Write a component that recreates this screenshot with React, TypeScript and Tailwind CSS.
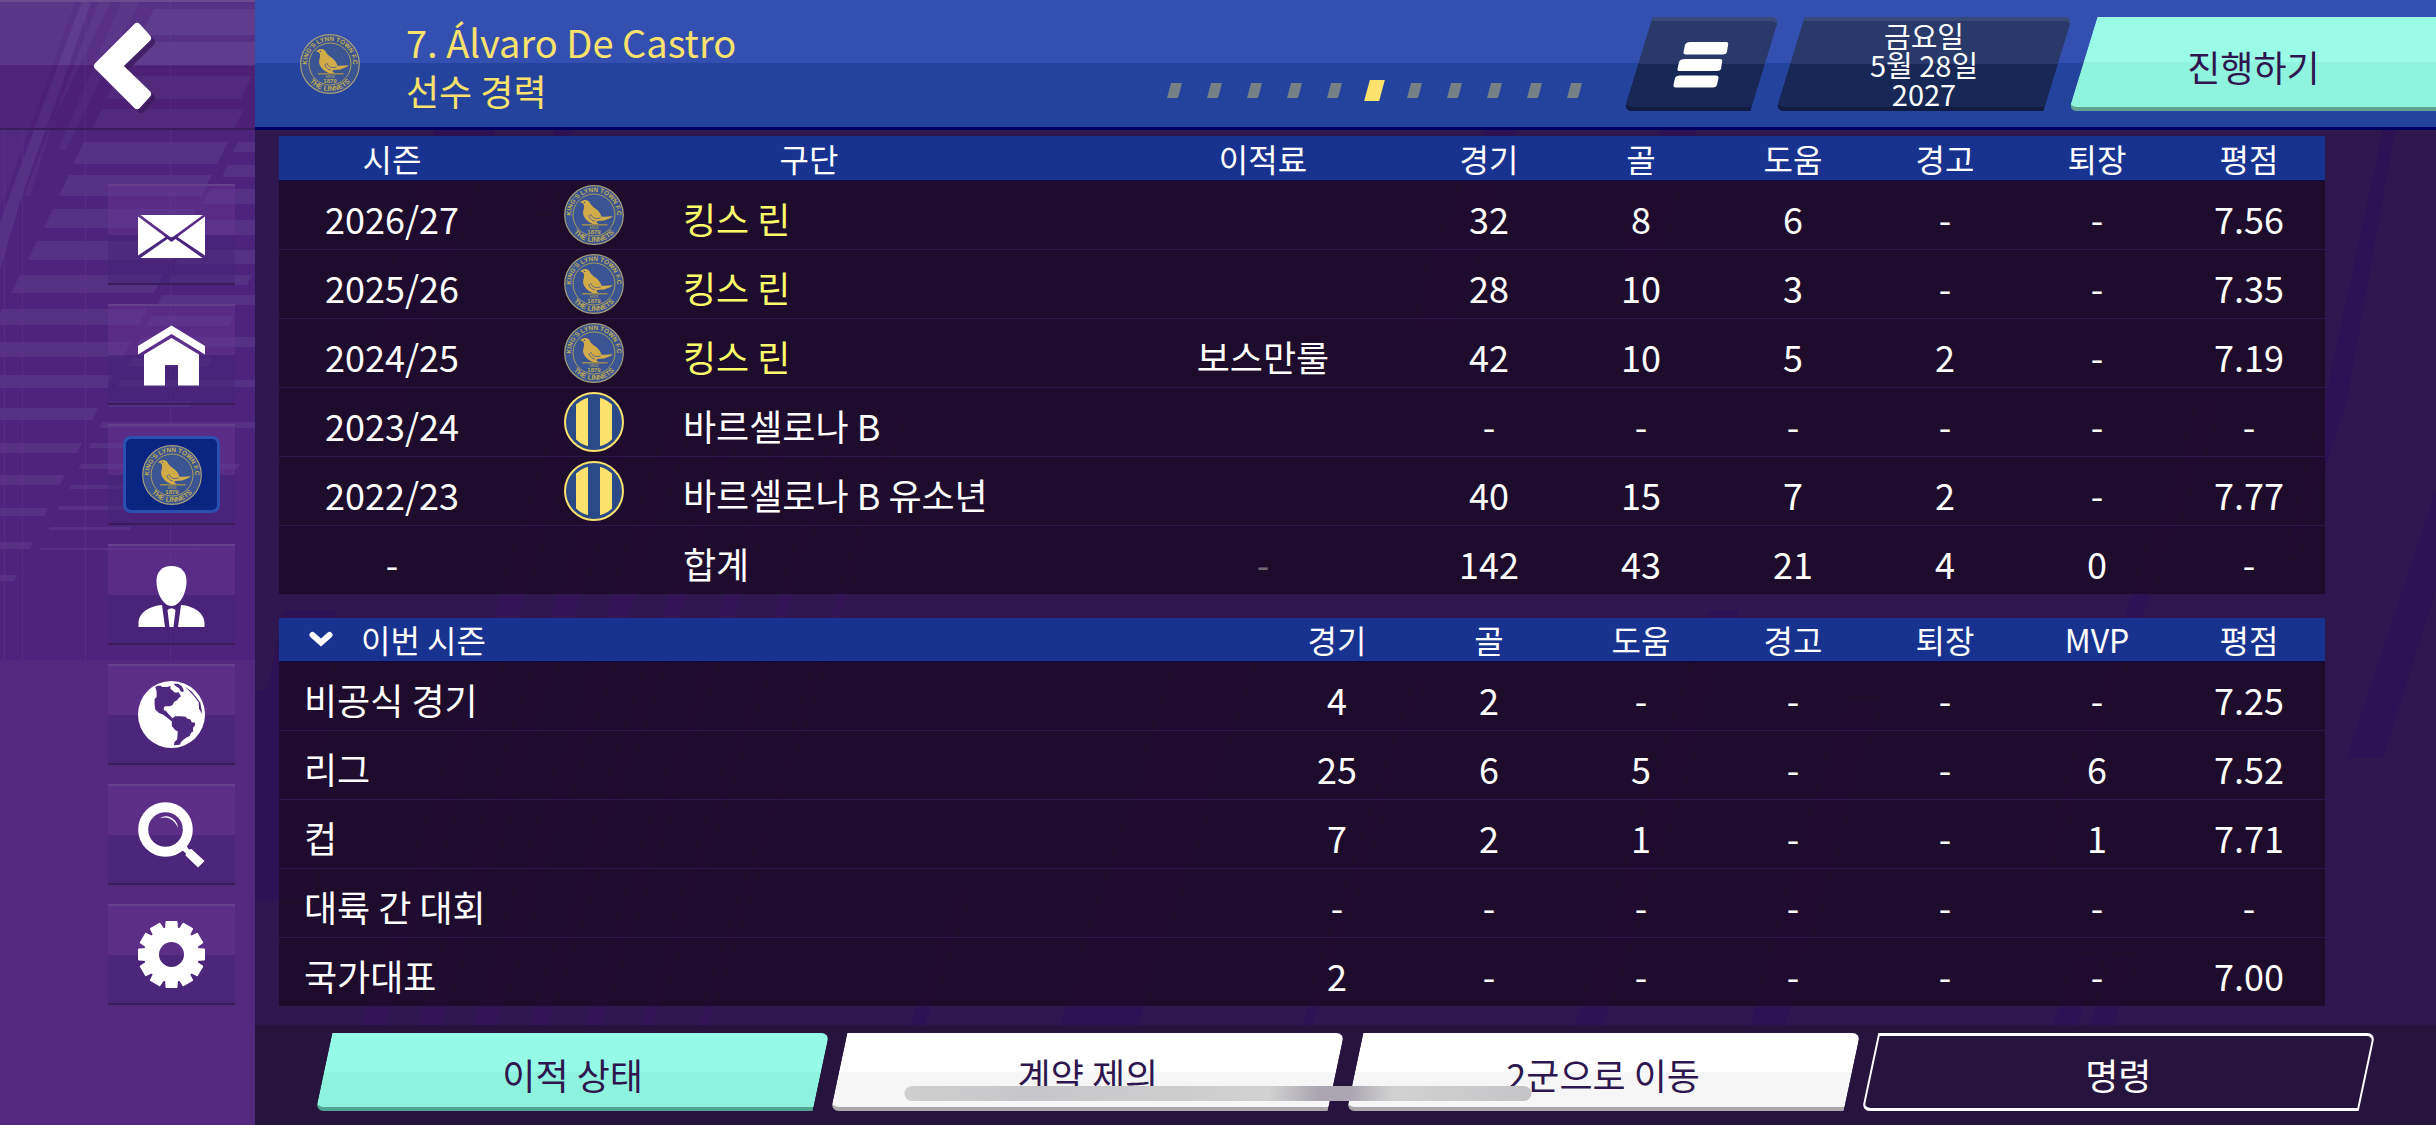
import { useId } from 'react'
import type { ReactNode } from 'react'

type Club = 'lynn' | 'barca'

type CareerRow = {
  season: string
  crest?: Club
  club: string
  fee?: string
  stats: string[]
}

const career: CareerRow[] = [
  { season: '2026/27', crest: 'lynn', club: '킹스 린', stats: ['32', '8', '6', '-', '-', '7.56'] },
  { season: '2025/26', crest: 'lynn', club: '킹스 린', stats: ['28', '10', '3', '-', '-', '7.35'] },
  { season: '2024/25', crest: 'lynn', club: '킹스 린', fee: '보스만룰', stats: ['42', '10', '5', '2', '-', '7.19'] },
  { season: '2023/24', crest: 'barca', club: '바르셀로나 B', stats: ['-', '-', '-', '-', '-', '-'] },
  { season: '2022/23', crest: 'barca', club: '바르셀로나 B 유소년', stats: ['40', '15', '7', '2', '-', '7.77'] },
  { season: '-', club: '합계', fee: '-', stats: ['142', '43', '21', '4', '0', '-'] },
]

const careerHeads = ['경기', '골', '도움', '경고', '퇴장', '평점']
const seasonHeads = ['경기', '골', '도움', '경고', '퇴장', 'MVP', '평점']

const currentSeason = [
  { name: '비공식 경기', stats: ['4', '2', '-', '-', '-', '-', '7.25'] },
  { name: '리그', stats: ['25', '6', '5', '-', '-', '6', '7.52'] },
  { name: '컵', stats: ['7', '2', '1', '-', '-', '1', '7.71'] },
  { name: '대륙 간 대회', stats: ['-', '-', '-', '-', '-', '-', '-'] },
  { name: '국가대표', stats: ['2', '-', '-', '-', '-', '-', '7.00'] },
]

function LynnCrest() {
  const id = useId()
  return (
    <svg viewBox="0 0 60 60" className="block size-[60px]" role="img" aria-label="King's Lynn Town">
      <defs>
        <path id={`${id}top`} d="M7.2 33 A23 23 0 1 1 52.8 33" />
        <path id={`${id}bot`} d="M2.8 32 A27.3 27.3 0 0 0 57.2 32" />
      </defs>
      <circle cx="30" cy="30" r="29.3" fill="#3a5592" stroke="#a79f7c" strokeWidth="1.2" />
      <circle cx="30" cy="30" r="21" fill="#3a5592" stroke="#a89b62" strokeWidth="1" />
      <g fill="#c4ac52" fontFamily="Liberation Sans, sans-serif" fontWeight="700" textAnchor="middle">
        <text fontSize="6.4">
          <textPath href={`#${id}top`} startOffset="50%">KING'S LYNN TOWN F.C</textPath>
        </text>
        <text fontSize="7">
          <textPath href={`#${id}bot`} startOffset="50%">THE LINNETS</textPath>
        </text>
        <text x="30" y="49" fontSize="6">1879</text>
        <text x="30" y="43.6" fontSize="3" opacity=".7">SINCE</text>
      </g>
      <path
        d="M15.8 17.2 L18.3 15.8 C20 14.6 23.4 14.6 25 16.6 C26.4 18.6 27 20.4 29.6 22.2 C33.6 25 36.6 27.4 37.2 31.4 C41 32 45 31.4 49 31.2 C46 33.4 41.6 35.8 36.4 35.8 C33.4 35.8 31.4 36.6 33 38 L35 39.2 L29.6 39.2 C24.6 37.4 20 33.6 19.2 29 C18.8 25.4 21 22 19.6 19.2 C19 18 17.4 17.6 15.8 17.2 Z"
        fill="#d3ac4a"
      />
      <path d="M26.8 29 C28 33 32 34.6 36.6 32.8 M25 30 C25 33 27.6 35.6 31 36" fill="none" stroke="#3a5592" strokeWidth=".8" />
      <circle cx="20.4" cy="17.4" r=".7" fill="#3a5592" />
      <path d="M18 39.8 H43.6" stroke="#a08f4e" strokeWidth="1.4" />
    </svg>
  )
}

function BarcaCrest() {
  const id = useId()
  return (
    <svg viewBox="0 0 60 60" className="block size-[60px]" role="img" aria-label="Barcelona B">
      <clipPath id={id}>
        <circle cx="30" cy="30" r="25" />
      </clipPath>
      <circle cx="30" cy="30" r="29" fill="#2a4a87" stroke="#fbe26c" strokeWidth="2" />
      <path d="M12 0h12v60H12zM36 0h12v60H36z" fill="#fbe26c" clipPath={`url(#${id})`} />
    </svg>
  )
}

// slanted bars: [x1, x2, y, height]
const bars = [
  [154, 270, 9, 26], [138, 270, 42, 24], [118, 252, 76, 23], [102, 244, 109, 21], [84, 228, 142, 22],
  [69, 212, 175, 21], [53, 196, 209, 19], [37, 180, 241, 19], [20, 163, 275, 18], [2, 147, 309, 16],
  [-20, 131, 342, 15], [-20, 114, 375, 13], [-20, 98, 408, 12], [-20, 82, 443, 10], [-20, 65, 475, 10],
  [-20, 48, 508, 8], [-20, 33, 542, 7], [-20, 17, 575, 6],
  [238, 270, 142, 10], [228, 270, 165, 12], [210, 270, 189, 15], [200, 270, 220, 15], [182, 270, 250, 14],
  [172, 252, 275, 10], [162, 270, 295, 10], [152, 234, 316, 10], [141, 270, 337, 10], [131, 212, 358, 9],
  [121, 270, 380, 7], [111, 193, 401, 6], [102, 270, 422, 6], [91, 172, 443, 5], [81, 240, 464, 5],
  [71, 150, 485, 4], [60, 220, 506, 4], [50, 131, 527, 3], [40, 199, 548, 2],
]

function SidebarBackdrop() {
  return (
    <svg viewBox="0 0 255 660" className="absolute inset-x-0 top-0 w-full" aria-hidden="true">
      <rect width="255" height="660" fill="#4e237d" />
      <g fill="#553085">
        {bars.map(([x1, x2, y, h]) => (
          <path key={`${x1}-${y}`} d={`M${x1} ${y}H${x2}L${x2 - h / 2} ${y + h}H${x1 - h / 2}Z`} />
        ))}
        <path d="M0 0H76L5 196L0 205Z" opacity=".55" />
        <path d="M82 0H92L22 196L0 270V222Z" />
        <path d="M99 0H112L54 118L30 196H24Z" opacity=".7" />
        <path d="M122 0H140L66 150H58Z" opacity=".6" />
      </g>
      <path d="M85.500 0V660M170.500 0V660M4.500 130V660M22.500 130V660" stroke="#5c3488" strokeWidth="1" opacity=".6" />
    </svg>
  )
}

function MainBackdrop() {
  return (
    <svg
      viewBox="0 0 2181 1125"
      preserveAspectRatio="xMidYMin slice"
      className="absolute inset-0 size-full"
      aria-hidden="true"
    >
      <path
        fill="#331557"
        d="M106 1025L304 415H328L130 1025ZM163 1025L361 415H384L186 1025ZM218 1025L416 415H439L241 1025ZM275 1025L473 415H490L292 1025ZM330 1025L528 415H544L346 1025ZM386 1025L584 415H596L398 1025ZM444 1025L642 415H650L452 1025Z"
      />
      <path
        fill="#2d1058"
        d="M180 130H240L150 410H98ZM300 130H318L296 212H276ZM655 1025L700 890H716L670 1025ZM805 1025L935 620H1012L883 1025ZM1047 1025L1160 680H1170L1057 1025ZM1175 260L1230 130H1262L1200 330H1160ZM1320 1025L1455 610H1484L1348 1025ZM1405 130H1441L1400 270H1360ZM1495 1025L1590 700H1625L1530 1025ZM1798 1025L1822 955H1848L1822 1025ZM1835 1025L1858 955H1882L1858 1025ZM2070 400H2092L2042 555H2030ZM2128 130H2140L2092 400H2070ZM1945 400H1968L1790 880H1778ZM2092 758L2181 490V590L2128 758ZM0 690L12 690L30 610H80L60 900H0Z"
        opacity=".8"
      />
    </svg>
  )
}

function EnvelopeIcon() {
  return (
    <svg viewBox="0 0 67 67" className="size-[67px] fill-white" aria-hidden="true">
      <path d="M2.500 14H65L35.500 35.500Q33.500 37 31.500 35.500ZM0 15.500L27.500 36L0 54.500ZM67 15.500V54.500L39.500 36ZM2.500 57L29.500 38L33.500 41L37.500 38L64.500 57Z" />
    </svg>
  )
}

function HomeIcon() {
  return (
    <svg viewBox="0 0 67 67" className="size-[67px] fill-white" aria-hidden="true">
      <path d="M33.500 4.500L67 25V33.500L33.500 13L0 33.500V25ZM33.500 17L61 33.500V64.500H40V44H27V64.500H6V33.500Z" />
    </svg>
  )
}

function PersonIcon() {
  return (
    <svg viewBox="0 0 67 67" className="size-[67px] fill-white" aria-hidden="true">
      <path d="M33.500 5C43 5 48.500 11 48.500 20C48.500 32 42 45 33.500 45C25 45 18.500 32 18.500 20C18.500 11 24 5 33.500 5Z" />
      <path d="M0.500 66V62C1 51 12 45 24 44L27 66ZM66.500 66V62C66 51 55 45 43 44L40 66ZM29.500 49Q33.500 45.500 37.500 49L35.500 66H31.500Z" />
    </svg>
  )
}

function GlobeIcon() {
  return (
    <svg viewBox="0 0 202 202" className="size-[67px]" aria-hidden="true">
      <circle cx="101" cy="101" r="101" fill="#fff" />
      <path
        fill="#4f2880"
        d="M52 18L60 14H70L72 18H88L98 15V24L104 28L110 35H118L122 34L130 46L124 50L118 58L110 62L104 72L96 76H82L78 80V88L84 90L90 97L104 112L112 106L130 106L144 108L148 113L158 116L162 124L172 126V134L166 140V152L160 156L156 166L146 170L136 178L130 184L126 192L108 194L110 184L118 176L120 152L112 148L102 136V122L92 114L76 102L62 96L52 86L50 70V54L56 48V30ZM108 8H120L132 16L138 28L136 34L128 30L124 22L112 14ZM142 17L162 32L180 54L188 66L194 100L184 84L183 64L166 42Z"
      />
      <path d="M146 16Q170 32 186 60" fill="none" stroke="#fff" strokeWidth="2" />
    </svg>
  )
}

function SearchIcon() {
  return (
    <svg viewBox="0 0 67 67" className="size-[67px]" aria-hidden="true">
      <circle cx="27.500" cy="28.500" r="22.300" fill="none" stroke="#fff" strokeWidth="10" />
      <path d="M21.500 17.500Q27 13.500 33 16.500Q39.500 20 40 27Q37 20 32 17.800Q27 15.500 21.500 17.500Z" fill="#fff" />
      <path d="M44 49L48.500 45L51 48.500L53.500 48L66.500 60L60 66.500L47.500 54.500L48 52.500Z" fill="#fff" />
    </svg>
  )
}

const teeth = [0, 30, 60, 90, 120, 150, 180, 210, 240, 270, 300, 330]

function GearIcon() {
  return (
    <svg viewBox="0 0 67 67" className="size-[67px]" aria-hidden="true">
      <circle cx="33.500" cy="33.500" r="20" fill="none" stroke="#fff" strokeWidth="15" />
      {teeth.map((deg) => (
        <path key={deg} d="M27.500 1Q27.500 0 28.500 0H38.500Q39.500 0 39.500 1L40 9H27Z" fill="#fff" transform={`rotate(${deg} 33.500 33.500)`} />
      ))}
    </svg>
  )
}

const navItems: { label: string; icon: ReactNode }[] = [
  { label: '메시지', icon: <EnvelopeIcon /> },
  { label: '홈', icon: <HomeIcon /> },
  {
    label: '구단',
    icon: (
      <span className="flex h-[77px] w-[97px] items-center justify-center rounded-lg border-[3px] border-[#2a4fae] bg-[#0a2482]">
        <LynnCrest />
      </span>
    ),
  },
  { label: '감독', icon: <PersonIcon /> },
  { label: '세계', icon: <GlobeIcon /> },
  { label: '검색', icon: <SearchIcon /> },
  { label: '설정', icon: <GearIcon /> },
]

function Sidebar() {
  return (
    <aside className="relative w-[255px] shrink-0 bg-[#53287e]">
      <SidebarBackdrop />
      <div className="relative flex flex-col">
        <button
          type="button"
          aria-label="뒤로"
          className="flex h-[130px] w-full justify-center border-t-2 border-b-2 border-t-[#6d4b92] border-b-[#3b1c5c] bg-[linear-gradient(rgba(255,255,255,0.06)_50%,rgba(75,25,95,0.25)_50%)]"
        >
          <svg viewBox="0 0 70 100" className="mt-3 h-[100px] w-[70px]" aria-hidden="true">
            <path
              d="M44 13L54 24L25 52L54 80L44 91L5 52Z"
              transform="translate(4 4)"
              fill="#3c1b5e"
              stroke="#3c1b5e"
              strokeWidth="8"
              strokeLinejoin="round"
              opacity=".8"
            />
            <path
              d="M44 13L54 24L25 52L54 80L44 91L5 52Z"
              fill="#fff"
              stroke="#fff"
              strokeWidth="8"
              strokeLinejoin="round"
            />
          </svg>
        </button>
        <nav className="flex flex-col items-end gap-[19px] pt-[54px] pr-5">
          {navItems.map((item) => (
            <button
              key={item.label}
              type="button"
              aria-label={item.label}
              className="flex h-[101px] w-[127px] items-center justify-center border-t-2 border-b-2 border-t-[#65408d] border-b-[#3b1c5c] bg-[linear-gradient(rgba(104,54,146,0.45)_50%,rgba(68,36,118,0.5)_50%)]"
            >
              {item.icon}
            </button>
          ))}
        </nav>
      </div>
    </aside>
  )
}

const careerPages = [1, 2, 3, 4, 5, 6, 7, 8, 9, 10, 11]

function PageDots() {
  return (
    <ol className="flex items-center gap-[29px] pt-[54px]">
      {careerPages.map((page) => (
        <li
          key={page}
          className={
            page === 6
              ? '-mx-0.5 h-[21px] w-[15px] -skew-x-15 bg-[#fbe26c]'
              : 'h-[15px] w-[11px] -skew-x-15 bg-[#758184]'
          }
        />
      ))}
    </ol>
  )
}

function Header() {
  return (
    <header className="flex h-[130px] items-start overflow-hidden border-b-[3px] border-[#00005f] bg-[linear-gradient(#3350b0_50%,#24439c_50%)] pl-[45px]">
      <div className="flex flex-1 items-center gap-[46px] self-stretch">
        <LynnCrest />
        <h1 className="pt-1 text-[38px] leading-[48px] font-normal text-[#fbe26c]">
          7. Álvaro De Castro
          <span className="block text-4xl leading-[48px]">선수 경력</span>
        </h1>
      </div>
      <div className="flex gap-[58px] self-stretch">
        <div className="self-center">
          <PageDots />
        </div>
        <div className="flex gap-[25px] pt-[17px]">
          <button type="button" aria-label="메뉴" className="relative h-[94px] w-[127px] pt-[2px]">
            <span className="absolute inset-0 -skew-x-17 rounded-tr-lg rounded-bl-lg border-t-4 border-b-4 border-t-[#384a78] border-b-[#101b3f] bg-[linear-gradient(#28396a_50%,#172856_50%)]" />
            <svg viewBox="0 0 57 46" className="relative mx-auto h-[46px] w-[57px] fill-white" aria-hidden="true">
              <path d="M14 0H50Q53 0 52 3L51 10Q50 12.500 47 12.500H10Q7 12.500 7.500 10L9 3Q10 0 14 0ZM9 17H44Q47 17 46 20L45 27Q44 29 41 29H4Q1 29 1.500 27L3 20Q4 17 9 17ZM4 33.500H40Q43 33.500 42.500 36L41 43Q40 45.500 37 45.500H0Q-3 45.500 -2.500 43L-1 36Q0 33.500 4 33.500Z" transform="translate(3 0)" />
            </svg>
          </button>
          <div className="relative flex h-[94px] w-[268px] items-center justify-center">
            <span className="absolute inset-0 -skew-x-17 rounded-tr-lg rounded-bl-lg border-t-4 border-b-4 border-t-[#384a78] border-b-[#101b3f] bg-[linear-gradient(#28396a_50%,#172856_50%)]" />
            <p className="relative text-center text-[29px] leading-[29px] text-white">
              금요일
              <br />
              5월 28일
              <br />
              2027
            </p>
          </div>
          <button type="button" className="relative h-[94px] w-[353px] pt-1 pr-3 text-4xl text-[#2e174e]">
            <span className="absolute inset-y-0 -right-10 left-0 -skew-x-17 rounded-bl-lg border-b-4 border-[#5fa293] bg-[linear-gradient(#9afce7_50%,#90f3de_50%)]" />
            <span className="relative">진행하기</span>
          </button>
        </div>
      </div>
    </header>
  )
}

const headRow = 'h-[44px] border-b border-[#0b0b4a] bg-[#17338f] text-[32px] leading-10 text-white'
const bodyRow = 'h-[69px] border-b border-[#2e174e]'

function CareerTable() {
  return (
    <table className="w-full table-fixed border-collapse bg-[#18091f]/70 text-center text-4xl text-white">
      <thead>
        <tr className={headRow}>
          <th scope="col" className="w-[226px] font-normal">시즌</th>
          <th scope="col" className="w-[178px]" aria-label="엠블럼" />
          <th scope="col" className="pr-[178px] font-normal">구단</th>
          <th scope="col" className="w-[300px] font-normal">이적료</th>
          {careerHeads.map((head) => (
            <th key={head} scope="col" className="w-[152px] font-normal">{head}</th>
          ))}
        </tr>
      </thead>
      <tbody>
        {career.map((row) => (
          <tr key={row.season} className={bodyRow}>
            <td className="pt-[6px]">{row.season}</td>
            <td>
              <span className="flex justify-center">
                {row.crest === 'lynn' && <LynnCrest />}
                {row.crest === 'barca' && <BarcaCrest />}
              </span>
            </td>
            <td className={row.crest === 'lynn' ? 'pt-[6px] text-left text-[#fdfd6b]' : 'pt-[6px] text-left'}>{row.club}</td>
            <td className={row.fee === '-' ? 'pt-[6px] text-[#6f6676]' : 'pt-[6px]'}>{row.fee}</td>
            {row.stats.map((value, i) => (
              <td key={careerHeads[i]} className="pt-[6px]">{value}</td>
            ))}
          </tr>
        ))}
      </tbody>
    </table>
  )
}

function SeasonTable() {
  return (
    <table className="w-full table-fixed border-collapse bg-[#18091f]/70 text-center text-4xl text-white">
      <thead>
        <tr className={headRow}>
          <th scope="col" className="pl-[30px] text-left font-normal">
            <button type="button" className="flex items-center gap-7">
              <svg viewBox="0 0 24 16" className="h-4 w-6" aria-hidden="true">
                <path d="M3.500 4L12 11.500L20.500 4" fill="none" stroke="#fff" strokeWidth="6" strokeLinecap="round" />
              </svg>
              이번 시즌
            </button>
          </th>
          {seasonHeads.map((head) => (
            <th key={head} scope="col" className="w-[152px] font-normal">{head}</th>
          ))}
        </tr>
      </thead>
      <tbody>
        {currentSeason.map((row) => (
          <tr key={row.name} className={bodyRow}>
            <th scope="row" className="pt-[6px] pl-[25px] text-left font-normal">{row.name}</th>
            {row.stats.map((value, i) => (
              <td key={seasonHeads[i]} className="pt-[6px]">{value}</td>
            ))}
          </tr>
        ))}
      </tbody>
    </table>
  )
}

const actions = [
  { label: '이적 상태', face: 'border-b-4 border-[#4fa48f] bg-[linear-gradient(#95fbe6_52%,#8df3de_52%)]', text: 'text-[#2e174e]' },
  { label: '계약 제의', face: 'border-b-4 border-[#a9a9a9] bg-[linear-gradient(#fff_52%,#f6f6f6_52%)]', text: 'text-[#2e174e]' },
  { label: '2군으로 이동', face: 'border-b-4 border-[#a9a9a9] bg-[linear-gradient(#fff_52%,#f6f6f6_52%)]', text: 'text-[#2e174e]' },
  { label: '명령', face: 'border-x-2 border-y-[3px] border-white', text: 'text-white' },
]

function ActionBar() {
  return (
    <footer className="relative flex gap-[18px] bg-[#26143f] px-[69px] pt-2 pb-[14px]">
      {actions.map((action) => (
        <button key={action.label} type="button" className={`relative h-[78px] flex-1 pt-1 text-4xl ${action.text}`}>
          <span className={`absolute inset-0 -skew-x-12 rounded-tr-lg rounded-bl-lg ${action.face}`} />
          <span className="relative">{action.label}</span>
        </button>
      ))}
    </footer>
  )
}

export default function App() {
  return (
    <div className="relative flex min-h-screen bg-[#2e174e] font-['Noto_Sans_CJK_KR',sans-serif]">
      <Sidebar />
      <div className="relative flex min-w-0 flex-1 flex-col">
        <MainBackdrop />
        <div className="relative flex flex-1 flex-col">
          <Header />
          <main className="flex flex-1 flex-col gap-[23px] pt-[6px] pr-[111px] pl-6">
            <CareerTable />
            <SeasonTable />
          </main>
          <ActionBar />
        </div>
      </div>
      <div className="absolute bottom-6 left-1/2 h-[15px] w-[627px] -translate-x-1/2 rounded-full bg-[linear-gradient(90deg,#cfcfcf,#c6c5c9_20%,#d0d0d0_52%,#d2d2d2_58%,#aaa5b0_66%,#aaa5b0_71%,#d2d2d2_78%,#c4c4c7)]" />
    </div>
  )
}
